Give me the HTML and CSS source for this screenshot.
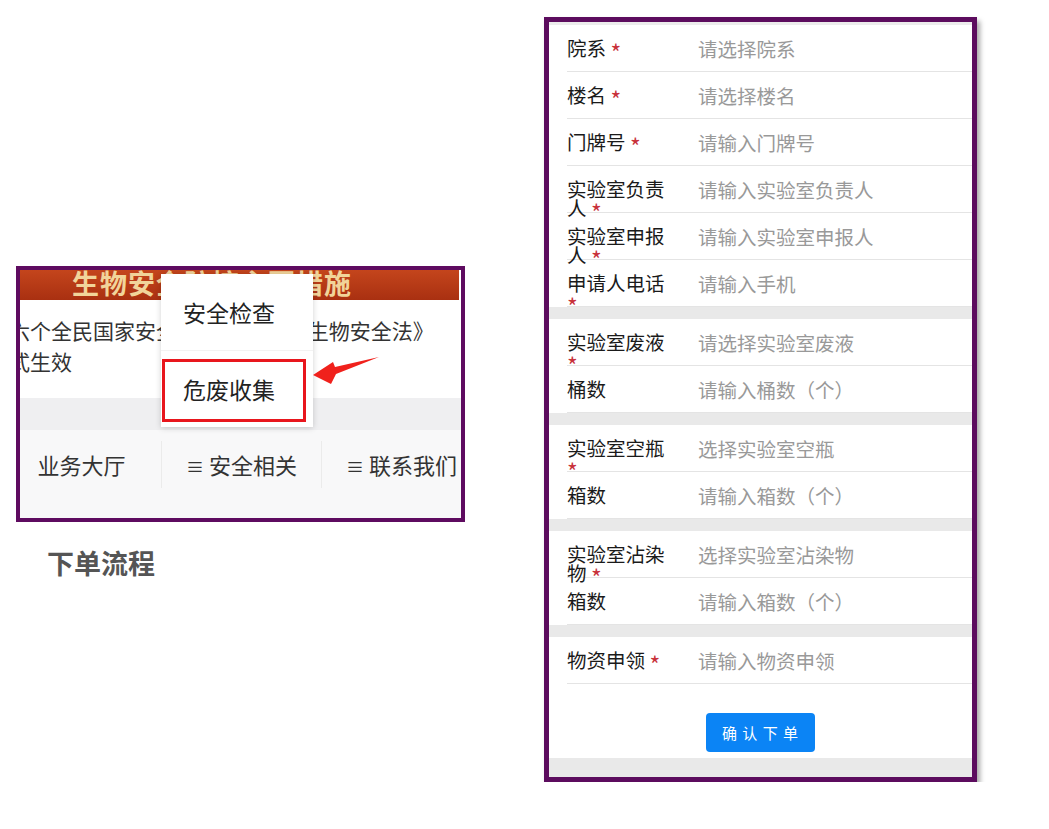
FILE: index.html
```html
<!DOCTYPE html>
<html lang="zh-CN">
<head>
	<meta charset="UTF-8">
	<title>下单流程</title>
	<link rel="stylesheet" href="styles.css">
</head>
<body>
	<div class="page">
		<div class="left">
			<div class="phone">
				<div class="screen">
					<div class="banner">生物安全防控主要措施</div>
					<div class="news">六个全民国家安全教育日之际 《生物安全法》<br>式生效</div>
					<div class="gap"></div>
					<div class="tabs">
						<div class="tab">业务大厅</div>
						<div class="tab"><span class="ico">≡</span> 安全相关</div>
						<div class="tab"><span class="ico">≡</span> 联系我们</div>
					</div>
					<div class="menu">
						<div class="menu-item first">安全检查</div>
						<div class="menu-item">危废收集</div>
						<div class="mark"></div>
					</div>
					<svg class="arrow" width="80" height="40" viewBox="0 0 80 40">
						<polygon points="8,25 28,12 30,17 74,7 31,24 26,34" fill="#f0211c"/>
					</svg>
				</div>
			</div>
			<div class="title">下单流程</div>
		</div>

		<div class="form">
			<div class="band-top"></div>
			<div class="row"><div class="label">院系 <i class="req">*</i></div><div class="ph">请选择院系</div></div>
			<div class="row"><div class="label">楼名 <i class="req">*</i></div><div class="ph">请选择楼名</div></div>
			<div class="row"><div class="label">门牌号 <i class="req">*</i></div><div class="ph">请输入门牌号</div></div>
			<div class="row"><div class="label">实验室负责人 <i class="req">*</i></div><div class="ph">请输入实验室负责人</div></div>
			<div class="row"><div class="label">实验室申报人 <i class="req">*</i></div><div class="ph">请输入实验室申报人</div></div>
			<div class="row"><div class="label">申请人电话 <i class="req">*</i></div><div class="ph">请输入手机</div></div>
			<div class="band"></div>
			<div class="row"><div class="label">实验室废液 <i class="req">*</i></div><div class="ph">请选择实验室废液</div></div>
			<div class="row"><div class="label">桶数</div><div class="ph">请输入桶数（个）</div></div>
			<div class="band"></div>
			<div class="row"><div class="label">实验室空瓶 <i class="req">*</i></div><div class="ph">选择实验室空瓶</div></div>
			<div class="row"><div class="label">箱数</div><div class="ph">请输入箱数（个）</div></div>
			<div class="band"></div>
			<div class="row"><div class="label">实验室沾染物 <i class="req">*</i></div><div class="ph">选择实验室沾染物</div></div>
			<div class="row"><div class="label">箱数</div><div class="ph">请输入箱数（个）</div></div>
			<div class="band"></div>
			<div class="row"><div class="label">物资申领 <i class="req">*</i></div><div class="ph">请输入物资申领</div></div>
			<div class="submit"><a class="btn" href="javascript:;">确 认 下 单</a></div>
			<div class="band-bottom"></div>
		</div>
	</div>
</body>
</html>
```

FILE: styles.css
```css
body {
	margin: 0;
	background: #fff;
	font-family: "Noto Sans CJK SC", "Noto Sans", sans-serif;
}
.page {
	display: flex;
	align-items: flex-start;
	padding: 17px 0 0 16px;
}

/* left screenshot */
.left {
	width: 449px;
	margin-top: 249px;
}
.phone {
	height: 256px;
	border: 4px solid #5e0b60;
	box-sizing: border-box;
}
.screen {
	position: relative;
	height: 100%;
	overflow: hidden;
	background: #fff;
}
.banner {
	height: 30px;
	margin-right: 2px;
	padding-left: 52px;
	background: linear-gradient(#c4451c, #a93011);
	color: #f1d49a;
	font-size: 27px;
	font-weight: 700;
	line-height: 26px;
	letter-spacing: 1px;
	white-space: nowrap;
	overflow: hidden;
}
.news {
	height: 98px;
	box-sizing: border-box;
	margin-left: -11px;
	padding-top: 15px;
	font-size: 21px;
	line-height: 31px;
	color: #333;
	white-space: nowrap;
}
.gap {
	height: 32px;
	background: #efeff1;
}
.tabs {
	display: flex;
	height: 88px;
	box-sizing: border-box;
	margin-left: -18px;
	padding-top: 11px;
	background: #f8f8f9;
}
.tab {
	flex: 0 0 160px;
	height: 47px;
	box-sizing: border-box;
	border-right: 1px solid #ebebeb;
	text-align: center;
	line-height: 47px;
	font-size: 22px;
	color: #333;
}
.tab .ico {
	font-size: 18px;
}
.menu {
	position: absolute;
	left: 141px;
	top: 4px;
	width: 152px;
	height: 153px;
	background: #fff;
	box-shadow: 0 1px 6px rgba(0, 0, 0, .18);
}
.menu-item {
	height: 76px;
	padding-left: 22px;
	line-height: 76px;
	font-size: 23px;
	color: #222;
}
.menu-item.first {
	border-bottom: 1px solid #f3f3f3;
}
.mark {
	position: absolute;
	left: 1px;
	top: 85px;
	width: 144px;
	height: 63px;
	box-sizing: border-box;
	border: 3px solid #e8161d;
}
.arrow {
	position: absolute;
	left: 285px;
	top: 80px;
}
.title {
	margin: 26px 0 0 31px;
	font-size: 27px;
	font-weight: 700;
	line-height: 30px;
	color: #555;
}

/* right form */
.form {
	width: 433px;
	margin-left: 79px;
	border: 5px solid #5c0c5e;
	box-sizing: border-box;
	background: #fff;
	box-shadow: 3px 4px 5px rgba(0, 0, 0, .35);
}
.band-top {
	height: 3px;
	background: #ececec;
}
.band {
	height: 12px;
	background: #e9e9e9;
}
.band-bottom {
	height: 19px;
	background: #e9e9e9;
}
.row {
	display: flex;
	align-items: center;
	height: 47px;
	box-sizing: border-box;
	margin-left: 18px;
	border-bottom: 1px solid #e4e4e4;
	font-size: 19.5px;
}
.label {
	flex: 0 0 105px;
	margin-right: 26px;
	height: 20px;
	line-height: 19px;
	color: #1a1a1a;
}
.req {
	font-style: normal;
	font-size: 23px;
	line-height: 0;
	color: #c8313a;
	vertical-align: -0.25em;
}
.ph {
	color: #999;
}
.submit {
	display: flex;
	justify-content: center;
	padding: 29px 0 6px;
}
.btn {
	width: 109px;
	height: 39px;
	border-radius: 4px;
	background: #0b84f5;
	color: #fff;
	text-align: center;
	line-height: 39px;
	font-size: 15px;
	letter-spacing: 1px;
	text-decoration: none;
}
```
